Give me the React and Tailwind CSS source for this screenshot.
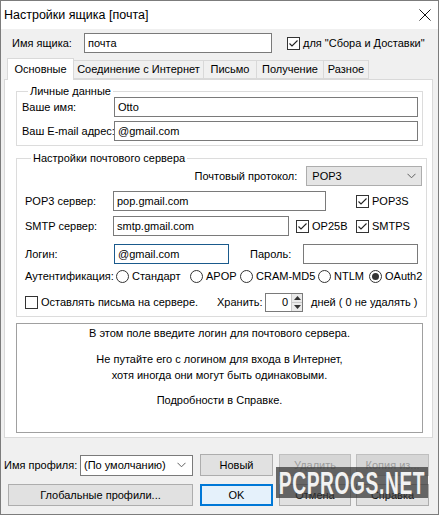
import React from "react";

const FONT = { fontFamily: '"Liberation Sans", Arial, sans-serif' };

function CheckBox({ checked }) {
  return (
    <span className="inline-flex h-[13px] w-[13px] shrink-0 items-center justify-center border border-[#333] bg-white">
      {checked && (
        <svg width="11" height="11" viewBox="0 0 11 11">
          <path d="M1.5 5.5 L4 8 L9.5 2.5" fill="none" stroke="#222" strokeWidth="1.1" />
        </svg>
      )}
    </span>
  );
}

function Radio({ checked }) {
  return (
    <span className="inline-flex h-[13px] w-[13px] shrink-0 items-center justify-center rounded-full border border-[#333] bg-white">
      {checked && <span className="h-[7px] w-[7px] rounded-full bg-[#333]" />}
    </span>
  );
}

function Field({ value = "", w, focused }) {
  return (
    <div
      className={`flex h-[20px] shrink-0 items-center bg-white px-[3px] leading-none text-black ${
        focused ? "border border-[#1a5a8c]" : "border border-[#7a7a7a]"
      } ${w}`}
    >
      {value}
    </div>
  );
}

function Chevron({ color = "#606060" }) {
  return (
    <svg width="9" height="6" viewBox="0 0 9 6">
      <path d="M0.5 0.8 L4.5 4.8 L8.5 0.8" fill="none" stroke={color} strokeWidth="1" />
    </svg>
  );
}

function Btn({ children, w, disabled, focused }) {
  let cls = "border border-[#adadad] bg-[#e1e1e1] text-black";
  if (disabled) cls = "border border-[#bfbfbf] bg-[#d6d6d6] text-[#9c9c9c]";
  if (focused) cls = "border-2 border-[#0078d7] bg-[#e5f1fb] text-black";
  return (
    <div className={`flex h-[22px] shrink-0 items-center justify-center leading-none ${cls} ${w}`}>
      {children}
    </div>
  );
}

function Tab({ label, w, active }) {
  if (active) {
    return (
      <div className={`relative z-10 -mb-px flex h-[22px] shrink-0 items-center justify-center border border-b-0 border-[#d9d9d9] bg-white ${w}`}>
        {label}
      </div>
    );
  }
  return (
    <div className={`mt-[2px] flex h-[19px] shrink-0 items-center justify-center border border-l-0 border-[#d9d9d9] bg-[#f0f0f0] ${w}`}>
      {label}
    </div>
  );
}

export default function App() {
  return (
    <div style={FONT} className="relative h-[515px] w-[439px] overflow-hidden whitespace-nowrap text-[11px] text-black">
      <div className="flex h-[515px] w-[439px] flex-col border border-[#7c7c7c] bg-[#f0f0f0]">
        {/* title bar */}
        <div className="flex h-[28px] shrink-0 items-center justify-between bg-white pl-[3px] pr-[7px]">
          <span className="text-[12.5px] leading-none">Настройки ящика [почта]</span>
          <svg width="12" height="12" viewBox="0 0 12 12">
            <path d="M0.5 0.5 L11.5 11.5 M11.5 0.5 L0.5 11.5" stroke="#111" strokeWidth="1" />
          </svg>
        </div>

        {/* mailbox name */}
        <div className="mt-[4px] flex h-[20px] items-center">
          <span className="w-[83px] shrink-0 pl-[11px]">Имя ящика:</span>
          <Field value="почта" w="w-[188px]" />
          <span className="ml-[15px] flex shrink-0 items-center gap-[3px]">
            <CheckBox checked />
            <span>для "Сбора и Доставки"</span>
          </span>
        </div>

        {/* tabs */}
        <div className="mt-[5px] flex h-[21px] items-start pl-[6px]">
          <Tab label="Основные" w="w-[67px]" active />
          <Tab label="Соединение с Интернет" w="w-[130px]" />
          <Tab label="Письмо" w="w-[53px]" />
          <Tab label="Получение" w="w-[67px]" />
          <Tab label="Разное" w="w-[45px]" />
        </div>

        <div className="ml-[3px] flex h-[359px] w-[429px] flex-col border border-[#d9d9d9] bg-white pl-[11px]">
          {/* personal data */}
          <fieldset className="mt-[5px] w-[407px] border border-[#dcdcdc] pb-[4px] pr-[4px] pl-[5px]">
            <legend className="ml-[6px] px-[2px] leading-[12px]">Личные данные</legend>
            <div className="flex h-[20px] items-center">
              <span className="w-[92px] shrink-0">Ваше имя:</span>
              <Field value="Otto" w="w-[304px]" />
            </div>
            <div className="mt-[4px] flex h-[20px] items-center">
              <span className="w-[92px] shrink-0">Ваш E-mail адрес:</span>
              <Field value="@gmail.com" w="w-[304px]" />
            </div>
          </fieldset>

          {/* mail server */}
          <fieldset className="mt-[6px] w-[407px] border border-[#dcdcdc] pb-[4px] pr-[4px] pl-[8px]">
            <legend className="ml-[6px] px-[2px] leading-[12px]">Настройки почтового сервера</legend>
            <div className="mt-[2px] flex h-[20px] items-center justify-end">
              <span className="mr-[9px] shrink-0">Почтовый протокол:</span>
              <div className="flex h-[20px] w-[116px] shrink-0 items-center justify-between border border-[#adadad] bg-[#e5e5e5] pl-[5px] pr-[5px]">
                <span>POP3</span>
                <Chevron />
              </div>
            </div>
            <div className="mt-[5px] flex h-[20px] items-center">
              <span className="w-[88px] shrink-0">POP3 сервер:</span>
              <Field value="pop.gmail.com" w="w-[213px]" />
              <span className="ml-[30px] flex shrink-0 items-center gap-[3px]">
                <CheckBox checked />
                <span>POP3S</span>
              </span>
            </div>
            <div className="mt-[5px] flex h-[20px] items-center">
              <span className="w-[88px] shrink-0">SMTP сервер:</span>
              <Field value="smtp.gmail.com" w="w-[176px]" />
              <span className="ml-[7px] flex w-[53px] shrink-0 items-center gap-[3px]">
                <CheckBox checked />
                <span>OP25B</span>
              </span>
              <span className="ml-[7px] flex shrink-0 items-center gap-[3px]">
                <CheckBox checked />
                <span>SMTPS</span>
              </span>
            </div>
            <div className="mt-[8px] flex h-[20px] items-center">
              <span className="w-[89px] shrink-0">Логин:</span>
              <Field value="@gmail.com" w="w-[115px]" focused />
              <span className="ml-[21px] w-[53px] shrink-0">Пароль:</span>
              <Field w="w-[115px]" />
            </div>
            <div className="mt-[4px] flex h-[16px] items-center">
              <span className="w-[91px] shrink-0">Аутентификация:</span>
              <span className="flex w-[74px] shrink-0 items-center gap-[3px]">
                <Radio />
                <span>Стандарт</span>
              </span>
              <span className="flex w-[50px] shrink-0 items-center gap-[3px]">
                <Radio />
                <span>APOP</span>
              </span>
              <span className="flex w-[78px] shrink-0 items-center gap-[3px]">
                <Radio />
                <span>CRAM-MD5</span>
              </span>
              <span className="flex w-[51px] shrink-0 items-center gap-[3px]">
                <Radio />
                <span>NTLM</span>
              </span>
              <span className="flex shrink-0 items-center gap-[3px]">
                <Radio checked />
                <span>OAuth2</span>
              </span>
            </div>
            <div className="mt-[9px] flex h-[19px] items-center">
              <span className="flex w-[192px] shrink-0 items-center gap-[3px]">
                <CheckBox />
                <span>Оставлять письма на сервере.</span>
              </span>
              <span className="w-[48px] shrink-0">Хранить:</span>
              <div className="flex h-[19px] w-[38px] shrink-0 items-center justify-end border border-[#7a7a7a] bg-white">
                <span className="mr-[3px]">0</span>
                <div className="flex h-[17px] w-[11px] flex-col border-l border-[#c8c8c8] bg-[#eaeaea]">
                  <div className="flex flex-1 items-center justify-center border-b border-[#c8c8c8]">
                    <svg width="7" height="4" viewBox="0 0 7 4">
                      <path d="M0 4 L3.5 0 L7 4 Z" fill="#333" />
                    </svg>
                  </div>
                  <div className="flex flex-1 items-center justify-center">
                    <svg width="7" height="4" viewBox="0 0 7 4">
                      <path d="M0 0 L3.5 4 L7 0 Z" fill="#333" />
                    </svg>
                  </div>
                </div>
              </div>
              <span className="ml-[8px] shrink-0">дней ( 0 не удалять )</span>
            </div>
          </fieldset>

          {/* hint */}
          <div className="mt-[6px] flex h-[110px] w-[407px] flex-col items-center border border-[#a0a0a0] bg-white pt-[1px] text-center leading-[16px]">
            <span>В этом поле введите логин для почтового сервера.</span>
            <span className="mt-[10px]">Не путайте его с логином для входа в Интернет,</span>
            <span>хотя иногда они могут быть одинаковыми.</span>
            <span className="mt-[9px]">Подробности в Справке.</span>
          </div>
        </div>

        {/* profile row */}
        <div className="mt-[16px] flex h-[22px] items-center">
          <span className="w-[79px] shrink-0 pl-[3px]">Имя профиля:</span>
          <div className="flex h-[21px] w-[113px] shrink-0 items-center justify-between border border-[#7a7a7a] bg-white pl-[3px] pr-[6px]">
            <span>(По умолчанию)</span>
            <Chevron />
          </div>
          <div className="ml-[7px]">
            <Btn w="w-[73px]">Новый</Btn>
          </div>
          <div className="ml-[6px]">
            <Btn w="w-[72px]" disabled>Удалить</Btn>
          </div>
          <div className="ml-[5px]">
            <Btn w="w-[73px]" disabled>Копия из...</Btn>
          </div>
        </div>
        <div className="mt-[8px] flex h-[22px] items-center pl-[7px]">
          <Btn w="w-[185px]">Глобальные профили...</Btn>
          <div className="ml-[7px]">
            <Btn w="w-[73px]" focused>OK</Btn>
          </div>
          <div className="ml-[6px]">
            <Btn w="w-[72px]">Отмена</Btn>
          </div>
          <div className="ml-[5px]">
            <Btn w="w-[73px]">Справка</Btn>
          </div>
        </div>
      </div>

      {/* site stamp */}
      <div className="absolute left-[276px] top-[467px] flex h-[31px] w-[152px] items-center justify-center overflow-hidden bg-[#3a3a3a]/75">
        <span
          className="origin-center scale-x-[0.6] whitespace-nowrap text-[32px] font-bold leading-none tracking-[1px] text-[#f2f2f2]"
          style={{ fontFamily: '"Liberation Sans", sans-serif' }}
        >
          PCPROGS.NET
        </span>
      </div>
    </div>
  );
}
